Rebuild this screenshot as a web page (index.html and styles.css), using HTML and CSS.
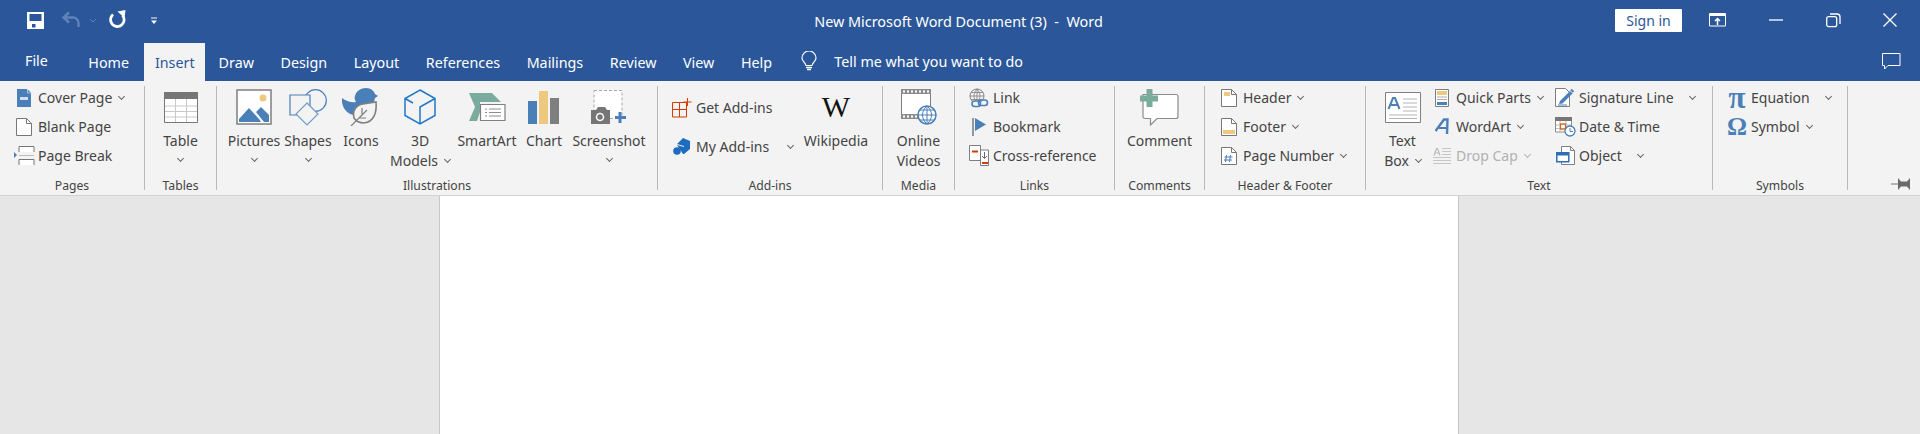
FILE: index.html
```html
<!DOCTYPE html>
<html lang="en">
<head>
<meta charset="utf-8">
<title>New Microsoft Word Document (3) - Word</title>
<link rel="stylesheet" href="styles.css">
</head>
<body>
<header class="chrome">
  <div class="titlebar">
    <div class="qat">
      <svg class="q-save" width="17" height="17" viewBox="0 0 17 17"><path d="M0 0h17v17H0z" fill="#fff"/><path d="M2.500 2h12v7h-12zM5 12h3.500v3.500H5z" fill="#2b579a"/></svg>
      <svg class="q-undo" width="20" height="18" viewBox="0 0 20 18"><path d="M8 1.500 2.500 6.500 8 11.500M3 6.500h9a5.500 5.500 0 0 1 5.500 5.500v4" fill="none" stroke="#5f83b8" stroke-width="2.400"/></svg>
      <svg class="q-chev" width="8" height="5" viewBox="0 0 8 5"><path d="M1 1l3 3 3-3" fill="none" stroke="#5f83b8"/></svg>
      <svg class="q-redo" width="18" height="20" viewBox="0 0 18 20"><path d="M5 5.500a6.800 6.800 0 1 0 9.500.8" fill="none" stroke="#fff" stroke-width="2.800"/><path d="M9.500 2.500L17.500 1l-1 8z" fill="#fff"/></svg>
      <svg class="q-more" width="8" height="8" viewBox="0 0 8 8"><path d="M1 1h6" stroke="#fff"/><path d="M1 3.500h6L4 7z" fill="#fff"/></svg>
    </div>
    <div class="doc-title">New Microsoft Word Document (3)&nbsp; -&nbsp; Word</div>
    <div class="win">
      <span class="signin">Sign in</span>
      <svg class="w-display" width="18" height="14" viewBox="0 0 18 14"><path d="M.5.500h16v12.500H.5z" fill="none" stroke="#fff"/><path d="M.5 1h16v2H.5z" fill="#fff"/><path d="M8.500 12V6M6 8l2.500-2.500L11 8" fill="none" stroke="#fff" stroke-width="1.500"/></svg>
      <svg class="w-min" width="14" height="2" viewBox="0 0 14 2"><path d="M0 1h14" stroke="#fff" stroke-width="1.300"/></svg>
      <svg class="w-max" width="15" height="15" viewBox="0 0 15 15"><rect x=".7" y="3.700" width="10" height="10" rx="2" fill="none" stroke="#fff" stroke-width="1.300"/><path d="M4 1h7a3 3 0 0 1 3 3v7" fill="none" stroke="#fff" stroke-width="1.300"/></svg>
      <svg class="w-close" width="14" height="14" viewBox="0 0 14 14"><path d="M.5.500l13 13M13.500.500l-13 13" stroke="#fff" stroke-width="1.300"/></svg>
    </div>
  </div>
  <nav class="tabs">
    <span class="tab tab-file">File</span>
    <span class="tab">Home</span>
    <span class="tab tab-on">Insert</span>
    <span class="tab">Draw</span>
    <span class="tab">Design</span>
    <span class="tab">Layout</span>
    <span class="tab">References</span>
    <span class="tab">Mailings</span>
    <span class="tab">Review</span>
    <span class="tab">View</span>
    <span class="tab">Help</span>
    <span class="tell">
      <svg width="16" height="21" viewBox="0 0 16 21"><path d="M5 14.500C4.500 11.500 1 10.500 1 7a7 7 0 0 1 14 0c0 3.500-3.500 4.500-4 7.500z" fill="none" stroke="#fff" stroke-width="1.200"/><path d="M5 16.500h6M6 18.500h4" stroke="#fff" stroke-width="1.300"/></svg>
      Tell me what you want to do
    </span>
    <svg class="share" width="19" height="17" viewBox="0 0 19 17"><path d="M.5.500h17.500v12H6L2.500 16v-3.500h-2z" fill="none" stroke="#fff"/></svg>
  </nav>
</header>

<section class="ribbon">
  <div class="group g-pages">
    <div class="body stack">
      <div class="sm"><span class="ic"><svg width="15" height="18" viewBox="0 0 15 18"><path d="M0 0h10l4 4v14H0z" fill="#4a7fb8"/><path d="M10.500 0l4 4h-4z" fill="#4a7fb8" stroke="#f3f3f3" stroke-width=".6"/><path d="M3 8h8v3H3z" fill="#fff" opacity=".75"/></svg></span>Cover Page<i class="chev"></i></div>
      <div class="sm"><span class="ic"><svg width="16" height="18" viewBox="0 0 16 18"><path d="M.5.500h10l5 5v12H.5z" fill="#fff" stroke="#777"/><path d="M10.500.500v5h5" fill="none" stroke="#777"/></svg></span>Blank Page</div>
      <div class="sm"><span class="ic"><svg width="21" height="19" viewBox="0 0 21 19"><path d="M0 6v6l3-3z" fill="#4a7fb8"/><path d="M5 6V.500h15V6M5 19v-5.500h15V19" fill="#fff" stroke="#777"/><path d="M5 9.500h15" stroke="#bbb"/></svg></span>Page Break</div>
    </div>
    <div class="label">Pages</div>
  </div>
  <i class="sep"></i>

  <div class="group g-tables">
    <div class="body">
      <div class="lg w-table">
        <span class="lic"><svg width="34" height="31" viewBox="0 0 34 31"><path d="M.5.500h33v30H.5z" fill="#fff" stroke="#777"/><path d="M0 0h34v7H0z" fill="#767676"/><path d="M1 14h32M1 19.500h32M1 25h32M11.500 7v23M22.500 7v23" stroke="#c8c8c8"/></svg></span>
        <span class="t">Table</span><i class="chev solo"></i>
      </div>
    </div>
    <div class="label">Tables</div>
  </div>
  <i class="sep"></i>

  <div class="group g-illus">
    <div class="body">
      <div class="lg w-pic">
        <span class="lic"><svg width="36" height="36" viewBox="0 0 36 36"><path d="M1 1h34v34H1z" fill="#fff" stroke="#7f7f7f" stroke-width="1.500"/><circle cx="27" cy="9" r="3.500" fill="#edc87e"/><path d="M3 33V30l10-11 10 11 2 3zM20 23l5-5 8 8v7h-5z" fill="#4a7fb8"/></svg></span>
        <span class="t">Pictures</span><i class="chev solo"></i>
      </div>
      <div class="lg w-sha">
        <span class="lic"><svg width="38" height="37" viewBox="0 0 38 37"><circle cx="26.500" cy="11.500" r="10.800" fill="none" stroke="#4a7fb8" stroke-width="1.200"/><path d="M1 6h20v20H1z" fill="#f3f3f3" stroke="#4a7fb8" stroke-width="1.200"/><path d="M18 14l11 11-11 11L7 25z" fill="#f3f3f3" stroke="#6f9bc8" stroke-width="1.200"/></svg></span>
        <span class="t">Shapes</span><i class="chev solo"></i>
      </div>
      <div class="lg w-ico">
        <span class="lic"><svg width="38" height="38" viewBox="0 0 38 38"><path d="M0 10c4 3 9 5 14 4-1-2-2-4-1-6 1-5 6-8 11-8 5 0 8 3 9 6l3 2-3 2c-1 6-4 11-10 15-3 2-8 3-11 2C4 26-1 18 0 10z" fill="#4a7fb8"/><path d="M12 30c-2-7 2-13 9-14l13-2c1 10-2 20-12 21-4 0-8-2-10-5z" fill="#f3f3f3" stroke="#7f7f7f" stroke-width="1.600"/><path d="M9 38l16-16M17 30h7M20 27v-7" fill="none" stroke="#7f7f7f" stroke-width="1.200"/></svg></span>
        <span class="t">Icons</span>
      </div>
      <div class="lg w-3d">
        <span class="lic"><svg width="32" height="36" viewBox="0 0 32 36"><path d="M16 1l15 8.500v17L16 35 1 26.500v-17zM16 35V18l15-8.500M1 9.500l8 4.500" fill="none" stroke="#1f78c8" stroke-width="1.500"/></svg></span>
        <span class="t">3D</span><span class="t">Models<i class="chev"></i></span>
      </div>
      <div class="lg w-art">
        <span class="lic"><svg width="37" height="29" viewBox="0 0 37 29"><path d="M0 0h23l9 9H11v10l-3 9H0l6-14z" fill="#7bab9c"/><path d="M11.500 11.500h24.500v16H11.500z" fill="#fff" stroke="#7f7f7f" stroke-width="1.200"/><path d="M16 16h2M20 16h12M16 19.500h2M20 19.500h12M16 23h2M20 23h12" stroke="#8c8c8c"/></svg></span>
        <span class="t">SmartArt</span>
      </div>
      <div class="lg w-chart">
        <span class="lic"><svg width="32" height="33" viewBox="0 0 32 33"><path d="M0 10h9v23H0z" fill="#4a7fb8"/><path d="M11 0h9v33h-9z" fill="#edc87e"/><path d="M22 7h9v26h-9z" fill="#7f7f7f"/></svg></span>
        <span class="t">Chart</span>
      </div>
      <div class="lg w-shot">
        <span class="lic"><svg width="36" height="34" viewBox="0 0 36 34"><path d="M3 .500h28v28H3z" fill="#fff" stroke="#aaa" stroke-dasharray="3 2"/><path d="M0 20h5l2-3h7l2 3h3v14H0z" fill="#767676"/><circle cx="9" cy="27" r="3.500" fill="none" stroke="#fff" stroke-width="1.500"/><path d="M29 22v11M24 27.500h11" stroke="#4a7fb8" stroke-width="3"/></svg></span>
        <span class="t">Screenshot</span><i class="chev solo"></i>
      </div>
    </div>
    <div class="label">Illustrations</div>
  </div>
  <i class="sep"></i>

  <div class="group g-addins">
    <div class="body">
      <div class="stack addins-col">
        <div class="sm tall"><span class="ic"><svg width="20" height="20" viewBox="0 0 20 20"><path d="M.5 4.500h14v14.500H.5zM7.500 4.500V19M.5 11.500h14" fill="none" stroke="#d83b01"/><path d="M15.500 0v8M11.500 4h8" stroke="#d83b01"/></svg></span>Get Add-ins</div>
        <div class="sm tall"><span class="ic"><svg width="18" height="18" viewBox="0 0 18 18"><path d="M4 6l6-6 7 3v8l-6 5v-8l-7-2z" fill="#1e6cbf"/><circle cx="4" cy="13" r="3.800" fill="#1e6cbf"/><path d="M4 7l7 2v7h-1" fill="#1e6cbf"/></svg></span>My Add-ins<i class="chev far"></i></div>
      </div>
      <div class="lg w-wiki">
        <span class="lic"><span class="wiki-w">W</span></span>
        <span class="t">Wikipedia</span>
      </div>
    </div>
    <div class="label">Add-ins</div>
  </div>
  <i class="sep"></i>

  <div class="group g-media">
    <div class="body">
      <div class="lg w-video">
        <span class="lic"><svg width="36" height="36" viewBox="0 0 36 36"><path d="M.5.500h29v29H.5z" fill="#fff" stroke="#7f7f7f"/><path d="M0 0h30v5H0zM0 25h18v5H0z" fill="#8c8c8c"/><path d="M3 1.500v2M7 1.500v2M11 1.500v2M15 1.500v2M19 1.500v2M23 1.500v2M27 1.500v2M3 26.500v2M7 26.500v2M11 26.500v2M15 26.500v2" stroke="#fff" stroke-width="2"/><circle cx="26" cy="26" r="9" fill="#fff" stroke="#4a7fb8" stroke-width="1.500"/><path d="M17 26h18M26 17v18M19 21h14M19 31h14M26 17c-6 5-6 13 0 18M26 17c6 5 6 13 0 18" fill="none" stroke="#4a7fb8"/></svg></span>
        <span class="t">Online</span><span class="t">Videos</span>
      </div>
    </div>
    <div class="label">Media</div>
  </div>
  <i class="sep"></i>

  <div class="group g-links">
    <div class="body stack">
      <div class="sm"><span class="ic"><svg width="20" height="20" viewBox="0 0 20 20"><circle cx="8" cy="8" r="7" fill="none" stroke="#7f7f7f"/><path d="M1 8h14M2 4.500h12M2 11.500h12M8 1v14M8 1c-4 4-4 10 0 14M8 1c4 4 4 10 0 14" fill="none" stroke="#7f7f7f" stroke-width=".8"/><rect x="3" y="13" width="8.500" height="5.500" rx="2.700" fill="#f3f3f3" stroke="#4a7fb8" stroke-width="1.600"/><rect x="9.500" y="12" width="9" height="5.500" rx="2.700" fill="none" stroke="#4a7fb8" stroke-width="1.600"/></svg></span>Link</div>
      <div class="sm"><span class="ic"><svg width="15" height="18" viewBox="0 0 15 18"><path d="M1 0v18" stroke="#7f7f7f" stroke-width="1.600"/><path d="M3 0l11 6.500L3 13z" fill="#4a7fb8"/></svg></span>Bookmark</div>
      <div class="sm"><span class="ic"><svg width="21" height="21" viewBox="0 0 21 21"><path d="M.5.500h11v15H.5z" fill="#fff" stroke="#7f7f7f"/><path d="M11.500 5h8v15.500h-8z" fill="#fff" stroke="#7f7f7f"/><path d="M3 6.500h6" stroke="#d83b01" stroke-width="2"/><path d="M13 18h6" stroke="#d83b01" stroke-width="2"/><path d="M15.500 7v6M13 11l2.500 2.500L18 11" fill="none" stroke="#666"/></svg></span>Cross-reference</div>
    </div>
    <div class="label">Links</div>
  </div>
  <i class="sep"></i>

  <div class="group g-comments">
    <div class="body">
      <div class="lg w-comment">
        <span class="lic"><svg width="39" height="37" viewBox="0 0 39 37"><path d="M3 5.500h33a2 2 0 0 1 2 2v20a2 2 0 0 1-2 2H17l-6.500 6.500v-6.500H5a2 2 0 0 1-2-2z" fill="#fff" stroke="#8c8c8c" stroke-width="1.200"/><path d="M6.500 0h6v6.500H18v6h-5.500V18h-6v-5.500H0v-6h6.500z" fill="#7bab9c"/></svg></span>
        <span class="t">Comment</span>
      </div>
    </div>
    <div class="label">Comments</div>
  </div>
  <i class="sep"></i>

  <div class="group g-hf">
    <div class="body stack">
      <div class="sm"><span class="ic"><svg width="16" height="18" viewBox="0 0 16 18"><path d="M.5.500h10l5 5v12H.5z" fill="#fff" stroke="#777"/><path d="M10.500.500v5h5" fill="none" stroke="#777"/><path d="M3 3h6v4H3z" fill="#edc87e"/></svg></span>Header<i class="chev"></i></div>
      <div class="sm"><span class="ic"><svg width="16" height="18" viewBox="0 0 16 18"><path d="M.5.500h10l5 5v12H.5z" fill="#fff" stroke="#777"/><path d="M10.500.500v5h5" fill="none" stroke="#777"/><path d="M2 12h12v4H2z" fill="#edc87e"/></svg></span>Footer<i class="chev"></i></div>
      <div class="sm"><span class="ic"><svg width="16" height="18" viewBox="0 0 16 18"><path d="M.5.500h10l5 5v12H.5z" fill="#fff" stroke="#777"/><path d="M10.500.500v5h5" fill="none" stroke="#777"/><path d="M5.500 8l-1 7M9.500 8l-1 7M3.500 10h8M3 13h8" stroke="#4a7fb8"/></svg></span>Page Number<i class="chev"></i></div>
    </div>
    <div class="label">Header &amp; Footer</div>
  </div>
  <i class="sep"></i>

  <div class="group g-text">
    <div class="body">
      <div class="lg w-box">
        <span class="lic"><svg width="36" height="31" viewBox="0 0 36 31"><path d="M.5.500h35v30H.5z" fill="#fff" stroke="#7f7f7f"/><path d="M18 7h14M18 11h14M18 15h14M18 19h14M4 23h28M4 26.500h28" stroke="#b5b5b5"/><path d="M3.500 17L8 6h2l4.500 11M5.500 13h7" fill="none" stroke="#4a7fb8" stroke-width="2"/></svg></span>
        <span class="t">Text</span><span class="t">Box<i class="chev"></i></span>
      </div>
      <div class="stack col-parts">
        <div class="sm"><span class="ic"><svg width="14" height="18" viewBox="0 0 14 18"><path d="M.5.500h13v17H.5z" fill="#fff" stroke="#7f7f7f"/><path d="M2 2h10v4H2z" fill="#edc87e"/><path d="M2 8h10M2 10.500h10" stroke="#aaa"/><path d="M2 13h10v3H2z" fill="#4a7fb8"/></svg></span>Quick Parts<i class="chev"></i></div>
        <div class="sm"><span class="ic"><svg width="14" height="17" viewBox="0 0 14 17"><path d="M.5 13L9 1.500h3.500L12 16" fill="none" stroke="#4a7fb8" stroke-width="2.400"/><path d="M4 10h8" stroke="#4a7fb8" stroke-width="2"/></svg></span>WordArt<i class="chev"></i></div>
        <div class="sm off"><span class="ic"><svg width="18" height="17" viewBox="0 0 18 17"><path d="M1 8.500L3.500 1.500h1L7 8.500M2 6h4" fill="none" stroke="#bbb" stroke-width="1.200"/><path d="M9 1.500h9M9 4.500h9M9 7.500h9M0 10.500h18M0 13.500h18M0 16.500h18" stroke="#c6c6c6"/></svg></span>Drop Cap<i class="chev"></i></div>
      </div>
      <div class="stack">
        <div class="sm"><span class="ic"><svg width="20" height="19" viewBox="0 0 20 19"><path d="M.5.500h10l4 4v14H.5z" fill="#fff" stroke="#7f7f7f"/><path d="M5 13L15 3l2.500 2.500-10 10L4 16z" fill="#4a7fb8"/><path d="M16 1.500l2.500 2.500" stroke="#4a7fb8" stroke-width="2"/><path d="M3 17h9" stroke="#4a7fb8"/></svg></span>Signature Line<i class="chev wide"></i></div>
        <div class="sm"><span class="ic"><svg width="21" height="20" viewBox="0 0 21 20"><path d="M.5.500h16v14.500H.5z" fill="#fff" stroke="#8c8c8c"/><path d="M0 0h17v4H0z" fill="#767676"/><path d="M1 8h15M1 11.500h15M5 4v11M11 4v11" stroke="#bbb"/><path d="M5.500 7h5v5h-5z" fill="#fff" stroke="#d86a1f" stroke-width="1.300"/><circle cx="15" cy="14" r="5" fill="#fff" stroke="#4a7fb8" stroke-width="1.300"/><path d="M15 11v3.500h3" fill="none" stroke="#4a7fb8"/></svg></span>Date &amp; Time</div>
        <div class="sm"><span class="ic"><svg width="19" height="19" viewBox="0 0 19 19"><path d="M5.500.500h9l4 4v14h-13z" fill="#fff" stroke="#7f7f7f"/><path d="M14.500.500v4h4" fill="none" stroke="#7f7f7f"/><path d="M.8 6.800h12v9h-12z" fill="#fff" stroke="#2f6eb5" stroke-width="1.500"/><path d="M1 7h12v2.500H1z" fill="#2f6eb5"/></svg></span>Object<i class="chev wide"></i></div>
      </div>
    </div>
    <div class="label">Text</div>
  </div>
  <i class="sep"></i>

  <div class="group g-sym">
    <div class="body stack">
      <div class="sm"><span class="ic glyph glyph-pi">π</span>Equation<i class="chev wide"></i></div>
      <div class="sm"><span class="ic glyph">Ω</span>Symbol<i class="chev"></i></div>
    </div>
    <div class="label">Symbols</div>
  </div>
  <i class="sep"></i>

  <div class="pin-cell">
    <svg width="20" height="12" viewBox="0 0 20 12"><path d="M0 6h8" stroke="#777" stroke-width="1"/><path d="M7 0l3 3.500h6L19 0v12l-3-3.500h-6L7 12z" fill="#6a6a6a"/></svg>
  </div>
</section>

<main class="workspace">
  <div class="page"></div>
</main>
</body>
</html>
```

FILE: styles.css
```css
* { box-sizing: border-box; }
html, body { margin: 0; height: 100%; overflow: hidden; }
body {
  font-family: "Noto Sans", "Open Sans", sans-serif;
  font-size: 14px;
  color: #444;
  display: flex;
  flex-direction: column;
  background: #e6e6e6;
}
svg { display: block; flex: none; }

/* title bar and tabs */
.chrome { background: #2b579a; color: #fff; height: 81px; flex: none; }
.titlebar {
  height: 43px;
  display: grid;
  grid-template-columns: 1fr auto 1fr;
  align-items: center;
}
.qat { display: flex; align-items: center; padding-left: 27px; margin-top: -3px; }
.q-undo { margin-left: 17px; }
.q-chev { margin-left: 8px; }
.q-redo { margin-left: 11px; margin-top: -2px; }
.q-more { margin-left: 24px; margin-top: 2px; }
.doc-title { font-size: 14.4px; white-space: nowrap; margin-right: 3px; margin-top: -1px; }
.win { display: flex; align-items: center; justify-content: flex-end; padding-right: 23px; margin-top: -3px; }
.signin {
  width: 67px; height: 23px; background: #fff; color: #2b579a;
  text-align: center; line-height: 23px; font-size: 14px; border-radius: 1px;
}
.w-display { margin-left: 27px; }
.w-min { margin-left: 42px; }
.w-max { margin-left: 43px; }
.w-close { margin-left: 42px; }

.tabs { height: 38px; display: flex; align-items: stretch; }
.tab { padding: 0 13.3px; line-height: 39px; white-space: nowrap; font-size: 14.3px; }
.tab-file { width: 75px; padding-left: 25px; line-height: 36px; }
.tab-on { width: 61px; padding: 0; margin-left: 2px; text-align: center; background: #f3f3f3; color: #2b579a; }
.tell { display: flex; align-items: center; gap: 17px; margin-left: 16px; padding-bottom: 1px; font-size: 14.3px; }
.share { margin: 0 19px 1px auto; align-self: center; }

/* ribbon */
.ribbon {
  height: 115px; flex: none; display: flex;
  background: #f3f3f3; border-bottom: 1px solid #d2d2d2;
}
.sep { width: 1px; flex: none; margin: 5px 0 5px; background: #b8b8b8; }
.group { display: flex; flex-direction: column; flex: none; }
.body { flex: 1; display: flex; min-height: 0; padding-top: 2px; }
.stack { flex-direction: column; display: flex; }
.label { height: 20px; line-height: 20px; text-align: center; font-size: 12.2px; white-space: nowrap; margin-bottom: -1px; }

.g-pages { width: 144px; }
.g-tables { width: 71px; }
.g-illus { width: 440px; }
.g-addins { width: 224px; }
.g-media { width: 71px; }
.g-links { width: 159px; }
.g-comments { width: 89px; }
.g-hf { width: 160px; }
.g-text { width: 346px; }
.g-sym { width: 134px; }
.g-illus .body { padding-left: 9px; }
.g-text .body { padding-left: 8px; }
.g-pages .stack, .g-links .stack, .g-hf .stack, .g-sym .stack, .addins-col { padding-left: 13px; }

.sm { height: 29px; display: flex; align-items: center; white-space: nowrap; font-size: 14px; }
.sm.tall { height: 39px; }
.addins-col { width: 145px; margin-top: 5px; }
.col-parts { width: 123px; }
.ic { width: 22px; margin-right: 3px; display: flex; justify-content: center; align-items: center; flex: none; }
.off { color: #b1b1b1; }
.glyph { font-family: "Liberation Serif", serif; font-weight: 700; font-size: 25px; line-height: 20px; color: #4a7fb8; }
.glyph-pi { font-size: 31px; }
.wiki-w { font-family: "Liberation Serif", serif; font-size: 30px; line-height: 40px; color: #111; }

.chev {
  display: inline-block; width: 5px; height: 5px; flex: none;
  border-right: 1px solid #666; border-bottom: 1px solid #666;
  transform: rotate(45deg); margin: -3px 0 0 7px;
}
.chev.wide { margin-left: 16px; }
.chev.far { margin-left: 19px; }
.chev.solo { margin: 5px 0 0; }
.off .chev { border-color: #b1b1b1; }

.lg { display: flex; flex-direction: column; align-items: center; flex: none; font-size: 14px; }
.lic { height: 40px; width: 100%; margin: 4px 0 4px; display: flex; align-items: center; justify-content: center; }
.t { height: 20px; line-height: 20px; white-space: nowrap; display: flex; align-items: center; }

.w-table { width: 71px; }
.w-pic { width: 56px; }
.w-sha { width: 52px; }
.w-ico { width: 54px; }
.w-3d { width: 64px; }
.w-art { width: 70px; }
.w-chart { width: 44px; }
.w-shot { width: 86px; }
.w-wiki { width: 66px; }
.w-video { width: 71px; }
.w-comment { width: 89px; }
.w-box { width: 57px; }

.pin-cell { flex: 1; display: flex; justify-content: flex-end; align-items: flex-end; padding: 0 9px 5px 0; }

/* document */
.workspace { flex: 1; display: flex; justify-content: center; padding-right: 23px; }
.page { width: 1020px; background: #fff; border-left: 1px solid #c6c6c6; border-right: 1px solid #c6c6c6; }
```
